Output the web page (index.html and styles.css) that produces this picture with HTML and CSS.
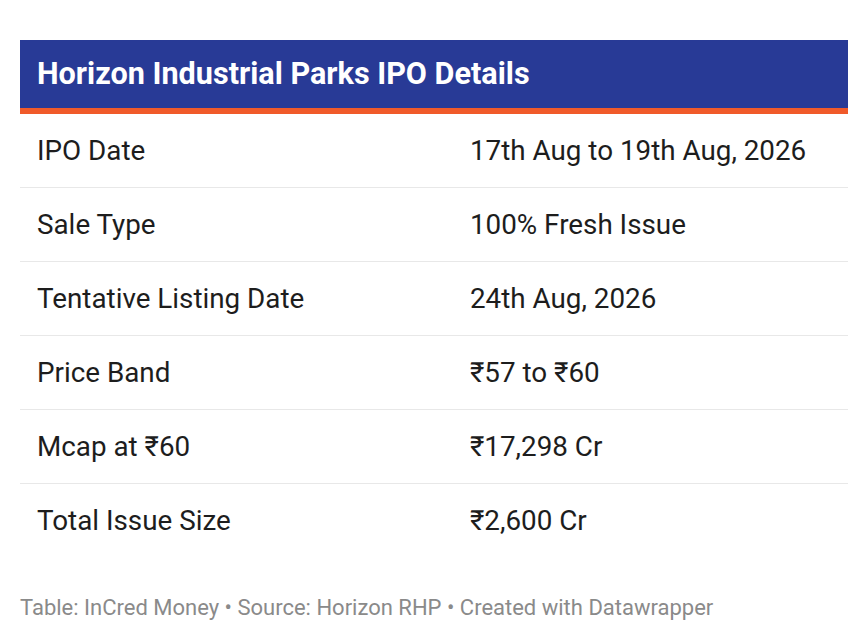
FILE: index.html
```html
<!DOCTYPE html>
<html lang="en">
<head>
<meta charset="utf-8">
<title>Horizon Industrial Parks IPO Details</title>
<link rel="stylesheet" href="styles.css">
</head>
<body>
<div class="wrap">
  <div class="title">Horizon Industrial Parks IPO Details</div>
  <div class="table">
    <div class="row"><div class="cell label">IPO Date</div><div class="cell value">17th Aug to 19th Aug, 2026</div></div>
    <div class="row"><div class="cell label">Sale Type</div><div class="cell value">100% Fresh Issue</div></div>
    <div class="row"><div class="cell label">Tentative Listing Date</div><div class="cell value">24th Aug, 2026</div></div>
    <div class="row"><div class="cell label">Price Band</div><div class="cell value">₹57 to ₹60</div></div>
    <div class="row"><div class="cell label">Mcap at ₹60</div><div class="cell value">₹17,298 Cr</div></div>
    <div class="row last"><div class="cell label">Total Issue Size</div><div class="cell value">₹2,600 Cr</div></div>
  </div>
  <div class="footer">Table: InCred Money • Source: Horizon RHP • Created with Datawrapper</div>
</div>
</body>
</html>
```
FILE: styles.css
```css
html, body {
  margin: 0;
  padding: 0;
  background: #ffffff;
}
body {
  font-family: Roboto, "Liberation Sans", sans-serif;
  color: #1d1d1d;
}
.wrap {
  padding: 40px 20px 0 20px;
}
.title {
  background: #283a96;
  color: #ffffff;
  font-weight: 700;
  font-size: 30.6px;
  height: 68px;
  line-height: 68px;
  padding-left: 17px;
  border-bottom: 6px solid #f05a2a;
}
.row {
  display: grid;
  grid-template-columns: 450px 1fr;
  height: 73px;
  align-items: center;
  border-bottom: 1px solid #e8e8e8;
}
.row.last {
  border-bottom: none;
}
.cell {
  font-size: 27.8px;
}
.label {
  padding-left: 17px;
}
.footer {
  margin-top: 38px;
  font-size: 22px;
  color: #8a8a8a;
}
```
